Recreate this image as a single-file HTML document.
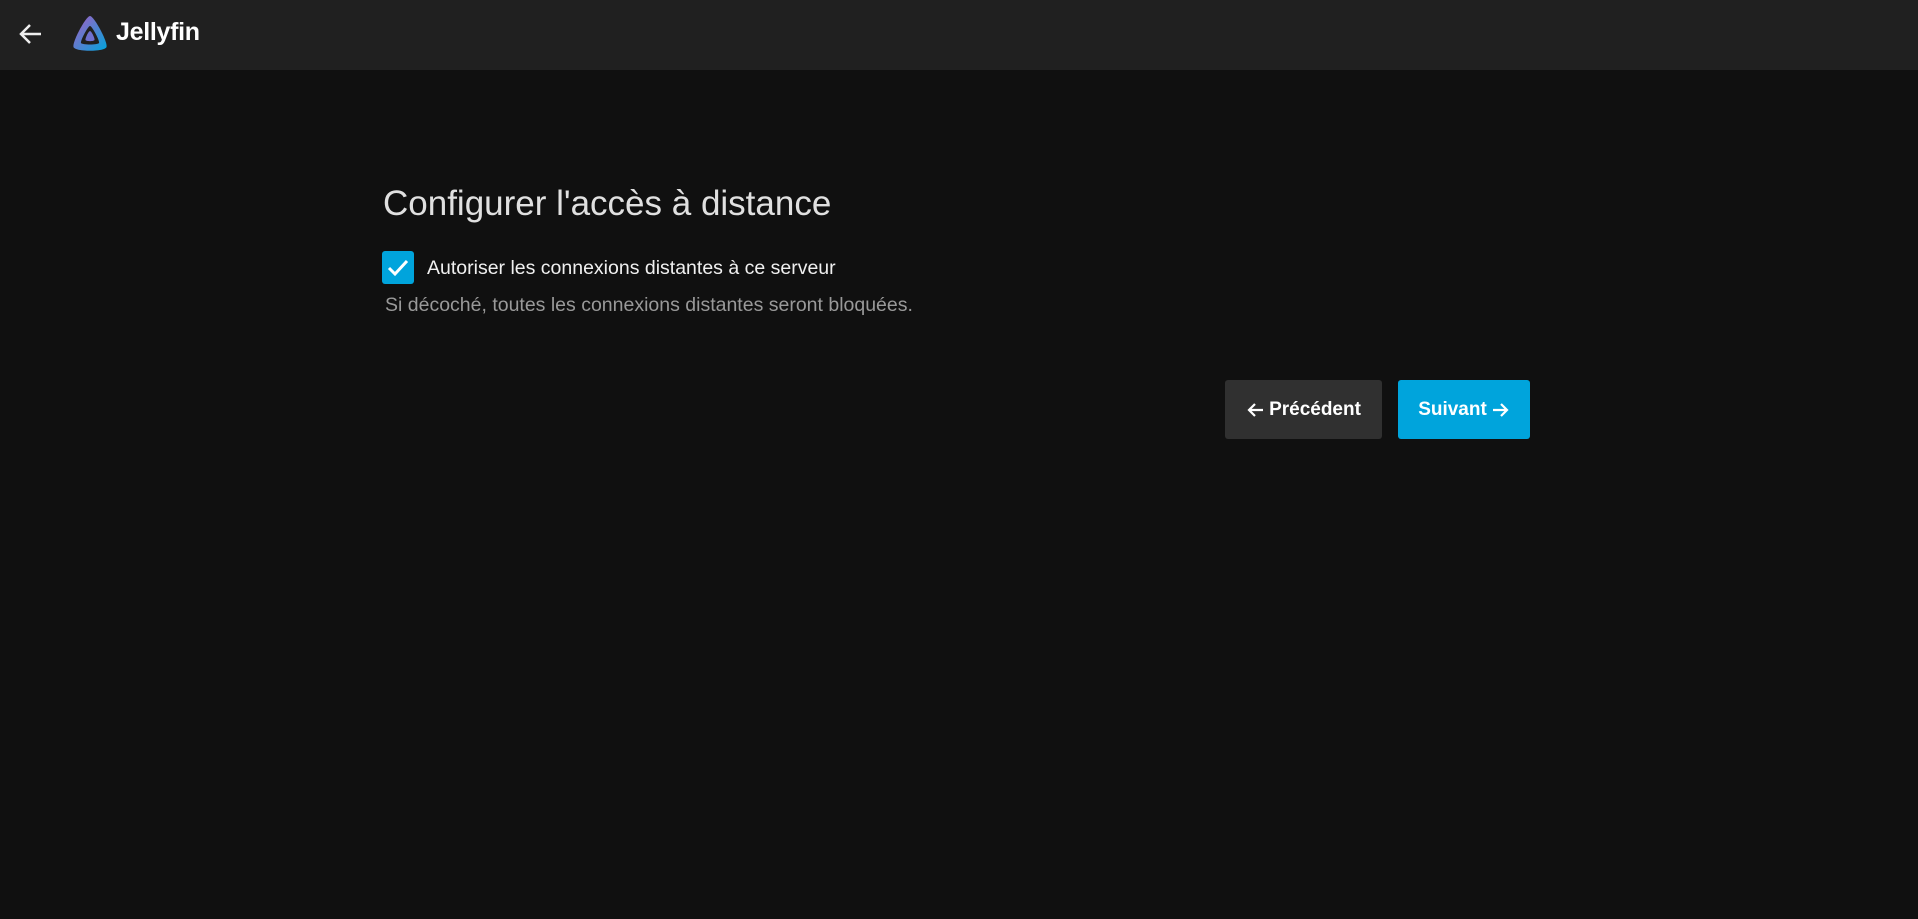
<!DOCTYPE html>
<html><head><meta charset="utf-8"><style>
*{margin:0;padding:0;box-sizing:border-box}
body{width:1918px;height:919px;background:#101010;font-family:"Liberation Sans",sans-serif;color:#e0e0e0;position:relative;overflow:hidden}
.hdr{position:absolute;left:0;top:0;width:1918px;height:70px;background:#202020}
.abs{position:absolute;white-space:nowrap}
.btn{position:absolute;top:380px;height:59px;border-radius:3px;color:#fff;font-weight:bold;font-size:19px;display:flex;align-items:center;justify-content:center}
</style></head><body>
<div class="hdr"></div>
<svg class="abs" style="left:18px;top:22px" width="26" height="24" viewBox="0 0 26 24"><path d="M23 12H4M12 3L3 12l9 9" stroke="#eee" stroke-width="2.5" fill="none"/></svg>
<svg class="abs" style="left:71px;top:15px" width="38" height="38" viewBox="0 0 38 38"><defs><linearGradient id="g" x1="0" y1="0" x2="1" y2="1"><stop offset="0" stop-color="#aa5cc3"/><stop offset="1" stop-color="#00a4dc"/></linearGradient></defs><path d="M19 1C15 1 1 27 2.5 32 4 37 34 37 35.5 32 37 27 23 1 19 1Z" fill="url(#g)"/><path d="M19 11C17 11 9 26 10 28 11 30 27 30 28 28 29 26 21 11 19 11Z" fill="#202020"/><path d="M19 16C17.5 16 14 23.5 14.5 25 15 26.5 23 26.5 23.5 25 24 23.5 20.5 16 19 16Z" fill="#6f70cf"/></svg>
<div class="abs" style="left:116px;top:18px;font-size:25px;font-weight:bold;color:#fff;letter-spacing:-0.3px">Jellyfin</div>
<div class="abs" style="left:383px;top:184px;font-size:35px;color:#e0e0e0">Configurer l'accès à distance</div>
<div class="abs" style="left:382px;top:251px;width:32px;height:33px;background:#00a4dc;border-radius:3px"><svg width="32" height="33" viewBox="0 0 32 33"><path d="M7 17l6 6 12-13" stroke="#fff" stroke-width="3" fill="none"/></svg></div>
<div class="abs" style="left:427px;top:257px;font-size:19.5px;color:#f0f0f0">Autoriser les connexions distantes à ce serveur</div>
<div class="abs" style="left:385px;top:294px;font-size:19.5px;color:#999">Si décoché, toutes les connexions distantes seront bloquées.</div>
<div class="btn" style="left:1225px;width:157px;background:#303030"><svg width="20" height="18" viewBox="0 0 20 18" style="margin-right:3px"><path d="M17 9H3M9 3L3 9l6 6" stroke="#fff" stroke-width="2.2" fill="none"/></svg>Précédent</div>
<div class="btn" style="left:1398px;width:132px;background:#00a4dc">Suivant<svg width="20" height="18" viewBox="0 0 20 18" style="margin-left:3px"><path d="M3 9h14M11 3l6 6-6 6" stroke="#fff" stroke-width="2.2" fill="none"/></svg></div>
</body></html>
